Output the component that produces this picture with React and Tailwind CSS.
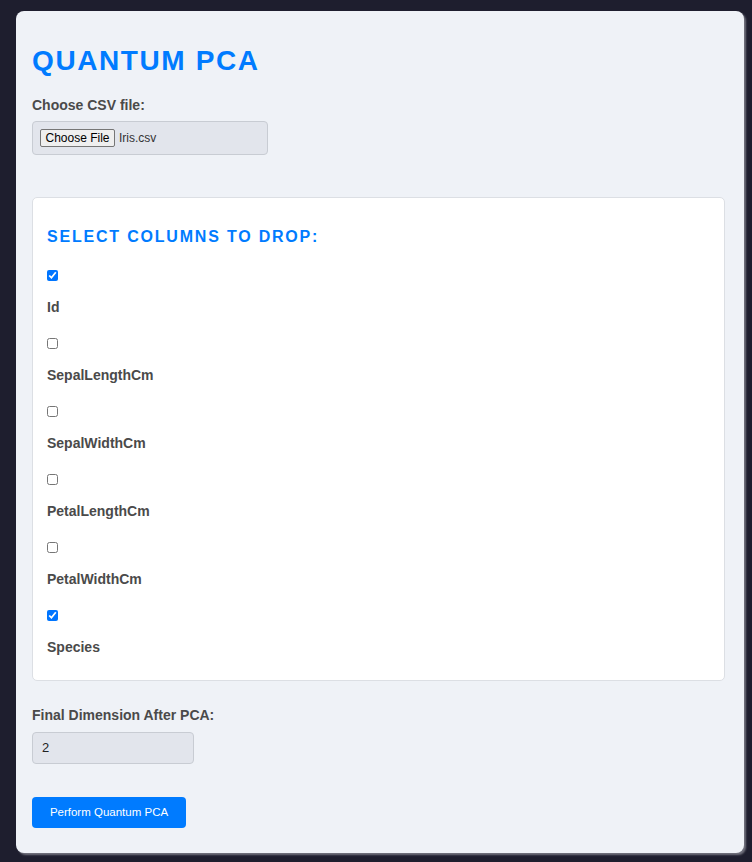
import React from "react";

const columns = [
  { name: "Id", checked: true },
  { name: "SepalLengthCm", checked: false },
  { name: "SepalWidthCm", checked: false },
  { name: "PetalLengthCm", checked: false },
  { name: "PetalWidthCm", checked: false },
  { name: "Species", checked: true },
];

export default function App() {
  return (
    <div
      className="min-h-[862px] bg-[#1e1e2e] pt-[11px] pb-[7px] pl-[16px] pr-[8px]"
      style={{ fontFamily: '"Liberation Sans", Arial, sans-serif' }}
    >
      <div className="w-[728px] rounded-[8px] bg-[#eff2f7] pl-[16px] pr-[19px] pt-[32px] pb-[25px] shadow-[2px_2px_2px_rgba(150,150,160,0.7)]">
        <h1 className="text-[28px] leading-[36px] font-bold tracking-[1.6px] text-[#007bff]">
          QUANTUM PCA
        </h1>

        <div className="mt-[18px] text-[14px] leading-[16px] font-bold text-[#4a4a4a]">
          Choose CSV file:
        </div>
        <div className="mt-[8px] flex h-[34px] w-[236px] items-center rounded-[4px] border border-[#c8ccd3] bg-[#e2e5ec] px-[7px]">
          <span className="flex h-[18px] w-[75px] items-center justify-center rounded-[2px] border border-[#767676] bg-[#efefef] text-[12px] leading-none text-black">
            Choose File
          </span>
          <span className="ml-[4px] text-[12px] leading-none text-[#333]">Iris.csv</span>
        </div>

        <div className="mt-[42px] rounded-[5px] border border-[#dcdfe4] bg-white px-[14px] pt-[29px] pb-[25px]">
          <h2 className="text-[16px] leading-[20px] font-bold tracking-[1.8px] text-[#007bff]">
            SELECT COLUMNS TO DROP:
          </h2>
          <div className="mt-[23px] flex flex-col gap-[23px]">
            {columns.map((c) => (
              <div key={c.name} className="flex flex-col">
                <input
                  type="checkbox"
                  defaultChecked={c.checked}
                  className="m-0 h-[11px] w-[11px]"
                />
                <label className="mt-[18px] text-[14px] leading-[16px] font-bold text-[#4a4a4a]">
                  {c.name}
                </label>
              </div>
            ))}
          </div>
        </div>

        <div className="mt-[26px] text-[14px] leading-[16px] font-bold text-[#4a4a4a]">
          Final Dimension After PCA:
        </div>
        <div className="mt-[9px] flex h-[32px] w-[162px] items-center rounded-[4px] border border-[#c8ccd3] bg-[#e2e5ec] px-[9px] text-[13px] text-[#222]">
          2
        </div>

        <button className="mt-[33px] flex h-[31px] w-[154px] items-center justify-center rounded-[4px] bg-[#007bff] text-[11.5px] text-white">
          Perform Quantum PCA
        </button>
      </div>
    </div>
  );
}
